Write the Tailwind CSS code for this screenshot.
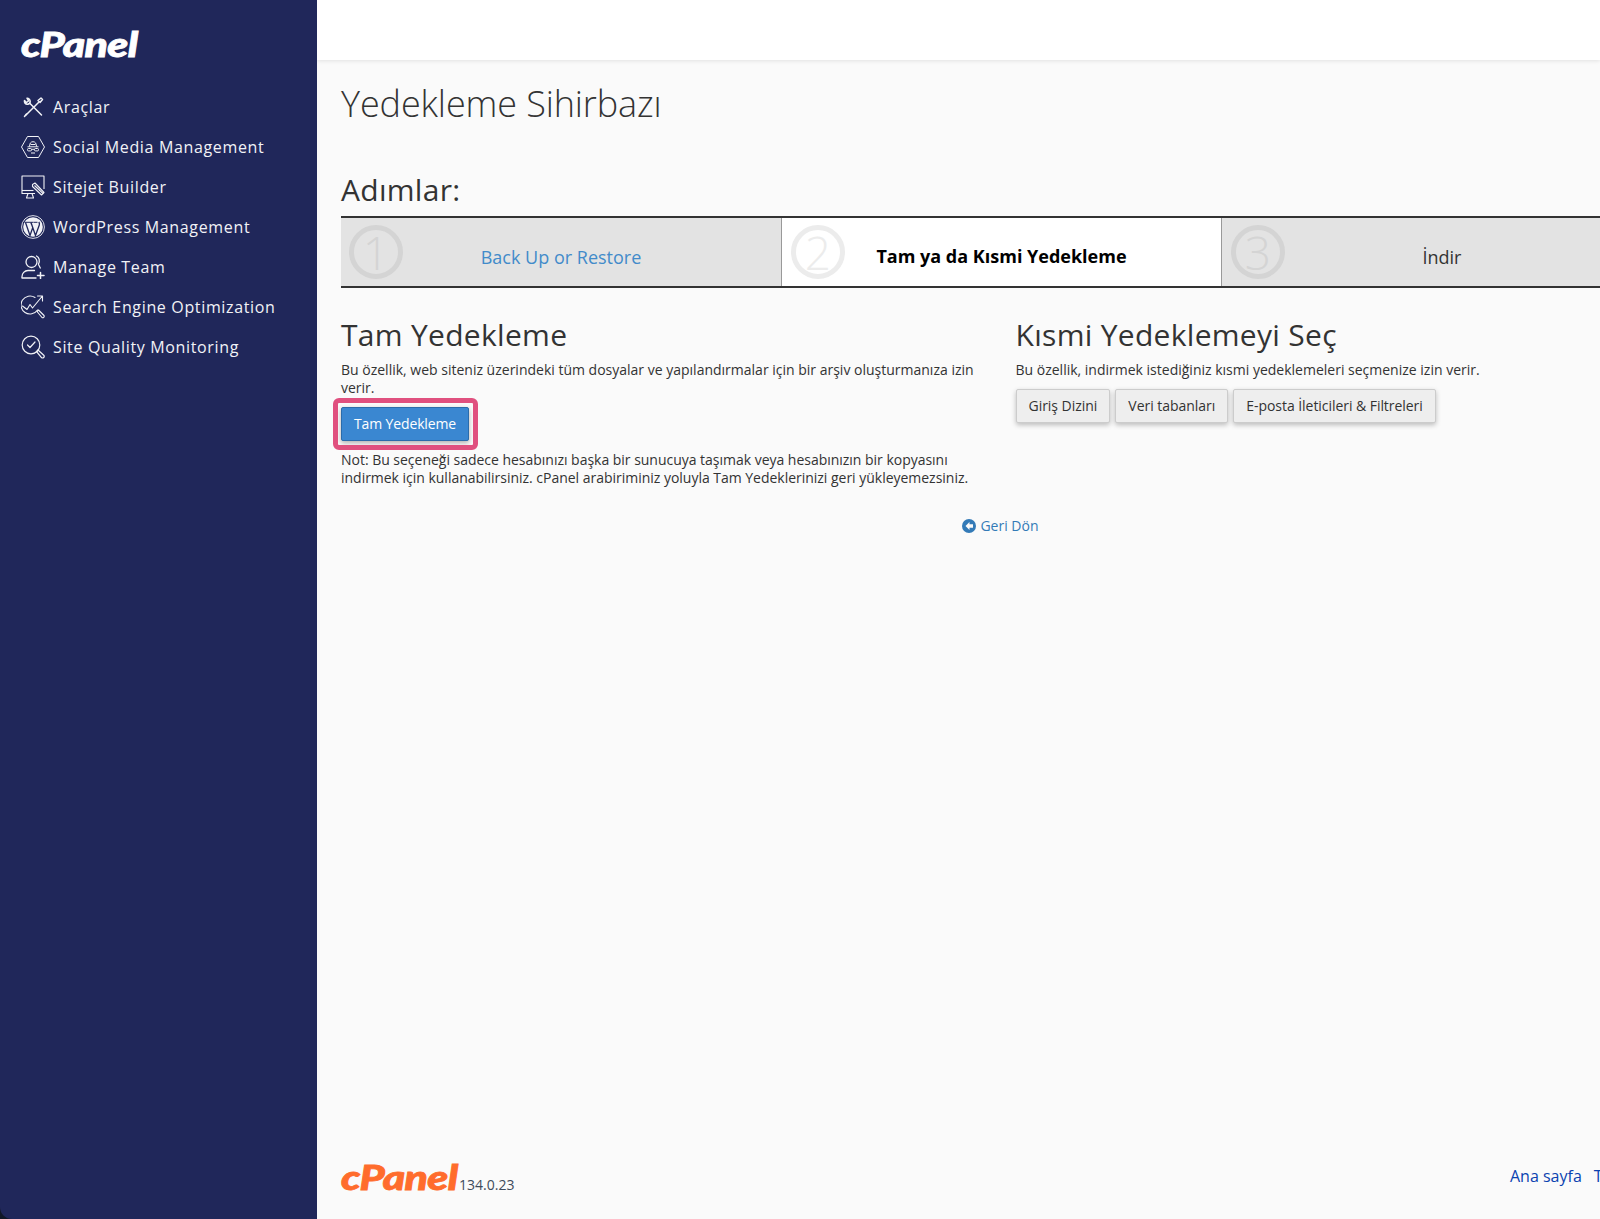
<!DOCTYPE html>
<html lang="tr">
<head>
<meta charset="utf-8">
<title>Yedekleme Sihirbazı</title>
<script src="https://cdn.jsdelivr.net/npm/@tailwindcss/browser@4"></script>
</head>
<body class="bg-[#111827] overflow-hidden font-['Open_Sans',sans-serif]">
<div class="flex w-[1600px] h-[1219px] overflow-hidden">
  <aside class="w-[317px] shrink-0 bg-[#20275a] rounded-bl-[12px] pl-[21px] pt-[26px] text-[#f1f2f6]">
    <div class="font-['Lato',sans-serif] font-black italic text-[34px] leading-[36px] tracking-[-0.5px] text-white h-[36px] origin-left scale-x-[1.26] [-webkit-text-stroke:0.8px_white]">cPanel</div>
    <nav class="mt-[25px] flex flex-col">
      <a class="flex items-center h-[40px] gap-[8px] text-[16px] font-medium tracking-[0.65px]">
        <svg class="w-[24px] h-[24px]" viewBox="0 0 24 24" fill="none" stroke="currentColor" stroke-width="1.500" stroke-linecap="round" stroke-linejoin="round"><path d="M5 20 17.500 7.500"/><path d="M17 5.500 20 3l1.500 1.500L19 7.500z"/><path d="M9 8.500 20.500 20"/><path d="M3.500 5.500c-.5 2 1 4 3 3.800 1.500-.2 2.800-1.300 2.700-3C9 4.500 7.500 3 6 3.200L7.500 6 5.500 7.500z"/><path d="M3.500 21.500 5.500 19"/></svg>
        <span>Araçlar</span>
      </a>
      <a class="flex items-center h-[40px] gap-[8px] text-[16px] font-medium tracking-[0.65px]">
        <svg class="w-[24px] h-[24px]" viewBox="0 0 24 24" fill="none" stroke="currentColor" stroke-width="1" stroke-linejoin="round"><path d="M6.500 1.500h11L23.500 12l-6 10.500h-11L.5 12z"/><path d="M8.500 11.500c0-3 1.300-4.800 3.500-4.800s3.500 1.800 3.500 4.800M6.500 11.800h11"/><rect x="6.500" y="13.500" width="4" height="2.400" rx="1"/><rect x="13.500" y="13.500" width="4" height="2.400" rx="1"/><path d="M10.500 14.300h3M9.500 9.500h5M10 18h4"/></svg>
        <span>Social Media Management</span>
      </a>
      <a class="flex items-center h-[40px] gap-[8px] text-[16px] font-medium tracking-[0.65px]">
        <svg class="w-[24px] h-[24px]" viewBox="0 0 24 24" fill="none" stroke="currentColor" stroke-width="1.100" stroke-linejoin="round"><path d="M14 18.500H1V1h22v13"/><path d="M1 15.500h11.500"/><path d="M7 18.500 5.500 23h7L11 18.500"/><path d="M11.500 9.500 14 8l9 9.500-2.500 2.500-9-8.500z"/><path d="M13.500 10.500l8.500 8"/></svg>
        <span>Sitejet Builder</span>
      </a>
      <a class="flex items-center h-[40px] gap-[8px] text-[16px] font-medium tracking-[0.65px]">
        <svg class="w-[24px] h-[24px]" viewBox="0 0 24 24" fill="none"><circle cx="12" cy="12" r="11.400" stroke="currentColor" stroke-width="0.9"/><circle cx="12" cy="12" r="9.800" fill="currentColor"/><path d="M4.500 7.500 9 20.500l2.800-8-2-5M10 7.500l4.500 13 3.800-10.500c.5-1.400 0-2.300-.5-3" stroke="#20275a" stroke-width="1.300" fill="none"/><path d="M3.500 7.300h8.800M12.500 7.300h4" stroke="#20275a" stroke-width="1"/></svg>
        <span>WordPress Management</span>
      </a>
      <a class="flex items-center h-[40px] gap-[8px] text-[16px] font-medium tracking-[0.65px]">
        <svg class="w-[24px] h-[24px]" viewBox="0 0 24 24" fill="none" stroke="currentColor" stroke-width="1.300" stroke-linecap="round"><circle cx="10.500" cy="7" r="5.500"/><path d="M15.500 1c3 1.500 3.500 5 2 8M17.500 9.500l1.800 3.500"/><path d="M1 23c-.5-5 3-7.500 6-7.500h6.500M1 23h14"/><path d="M19.500 17.500v6M16.500 20.500h6.500" stroke-width="1.500"/></svg>
        <span>Manage Team</span>
      </a>
      <a class="flex items-center h-[40px] gap-[8px] text-[16px] font-medium tracking-[0.65px]">
        <svg class="w-[24px] h-[24px]" viewBox="0 0 24 24" fill="none" stroke="currentColor" stroke-width="1.100" stroke-linecap="round" stroke-linejoin="round"><path d="M14 2.500A9 9 0 1 0 16.500 15"/><path d="M1.500 11 6 14.500l3-5 2.500 3.500L21 1.500M16.500 1h5v5"/><path d="m16 16.500 1.500-1.500 5.500 5.500c.8 1.500-.8 2.800-2 2z"/></svg>
        <span>Search Engine Optimization</span>
      </a>
      <a class="flex items-center h-[40px] gap-[8px] text-[16px] font-medium tracking-[0.65px]">
        <svg class="w-[24px] h-[24px]" viewBox="0 0 24 24" fill="none" stroke="currentColor" stroke-width="1.200" stroke-linecap="round" stroke-linejoin="round"><circle cx="10" cy="10" r="8.800"/><path d="m6.500 10 2.500 2.500L14 7"/><path d="m15.500 16.500 1.500-1.500 6 5.500c.8 1.500-.8 3-2.300 2.300z"/></svg>
        <span>Site Quality Monitoring</span>
      </a>
    </nav>
  </aside>
  <div class="flex-1 min-w-0 bg-[#fafafa] flex flex-col overflow-hidden">
    <header class="h-[60px] shrink-0 bg-white shadow-[0_1px_4px_rgba(0,0,0,0.1)]"></header>
    <main class="w-[1319px] ml-[24px] flex flex-col flex-1 text-[#333]">
      <h1 class="mt-[22px] text-[36px] leading-[44px] font-light tracking-[-0.11px]">Yedekleme Sihirbazı</h1>
      <h2 class="mt-[46px] text-[30px] leading-[36px] font-medium tracking-[0.3px]">Adımlar:</h2>
      <div class="mt-[8px] flex h-[72px] border-y-2 border-[#333]">
        <div class="relative w-[441px] shrink-0 bg-[#e3e3e3] border-r-[1.500px] border-[#999] flex items-center justify-center pt-[10px]">
          <div class="absolute left-[8px] top-[7px] w-[54px] h-[54px] rounded-full border-[5px] border-[#d4d4d4] flex items-center justify-center text-[#d4d4d4] text-[46px] font-light leading-none">1</div>
          <a class="text-[18px] text-[#428bca]">Back Up or Restore</a>
        </div>
        <div class="relative w-[440px] shrink-0 bg-white border-r-[1.500px] border-[#999] flex items-center justify-center pt-[8px]">
          <div class="absolute left-[9px] top-[7px] w-[54px] h-[54px] rounded-full border-[5px] border-[#ececec] flex items-center justify-center text-[#ececec] text-[46px] font-light leading-none">2</div>
          <span class="text-[18px] font-bold text-black">Tam ya da Kısmi Yedekleme</span>
        </div>
        <div class="relative w-[440px] shrink-0 bg-[#e3e3e3] flex items-center justify-center pt-[10px]">
          <div class="absolute left-[9px] top-[7px] w-[54px] h-[54px] rounded-full border-[5px] border-[#d4d4d4] flex items-center justify-center text-[#d4d4d4] text-[46px] font-light leading-none">3</div>
          <span class="text-[18px] text-[#333]">İndir</span>
        </div>
      </div>
      <div class="grid grid-cols-2 gap-x-[30px]">
        <section>
          <h2 class="mt-[29px] text-[30px] leading-[36px] tracking-[0.3px]">Tam Yedekleme</h2>
          <p class="mt-[8px] text-[14px] leading-[18px]">Bu özellik, web siteniz üzerindeki tüm dosyalar ve yapılandırmalar için bir arşiv oluşturmanıza izin verir.</p>
          <div class="relative mt-[10px] w-fit">
            <button class="block w-[128px] h-[34px] pb-[2px] bg-[#3a87d1] border border-[#2b6cab] rounded-[2px] text-white text-[14px] tracking-[-0.12px] shadow-[0_2px_5px_rgba(0,0,0,0.3)]">Tam Yedekleme</button>
            <div class="absolute -left-[8px] -top-[9px] w-[145px] h-[52px] border-[5px] border-[#e0507f] rounded-[6px]"></div>
          </div>
          <p class="mt-[10px] text-[14px] leading-[18px] tracking-[-0.02px]">Not: Bu seçeneği sadece hesabınızı başka bir sunucuya taşımak veya hesabınızın bir kopyasını indirmek için kullanabilirsiniz. cPanel arabiriminiz yoluyla Tam Yedeklerinizi geri yükleyemezsiniz.</p>
        </section>
        <section>
          <h2 class="mt-[29px] text-[30px] leading-[36px] tracking-[0.3px]">Kısmi Yedeklemeyi Seç</h2>
          <p class="mt-[8px] text-[14px] leading-[18px]">Bu özellik, indirmek istediğiniz kısmi yedeklemeleri seçmenize izin verir.</p>
          <div class="mt-[10px] flex gap-[5px]">
            <button class="h-[34px] px-[12px] pb-[2px] bg-[#eee] border border-[#ccc] rounded-[2px] text-[14px] tracking-[-0.03px] text-[#333] shadow-[0_2px_5px_rgba(0,0,0,0.25)]">Giriş Dizini</button>
            <button class="h-[34px] px-[12px] pb-[2px] bg-[#eee] border border-[#ccc] rounded-[2px] text-[14px] tracking-[-0.03px] text-[#333] shadow-[0_2px_5px_rgba(0,0,0,0.25)]">Veri tabanları</button>
            <button class="h-[34px] px-[12px] pb-[2px] bg-[#eee] border border-[#ccc] rounded-[2px] text-[14px] tracking-[-0.05px] text-[#333] shadow-[0_2px_5px_rgba(0,0,0,0.25)]">E-posta İleticileri &amp; Filtreleri</button>
          </div>
        </section>
      </div>
      <div class="mt-[30px] flex justify-center items-center gap-[4px] text-[14px] leading-[18px] text-[#337ab7]">
        <svg class="w-[14px] h-[14px]" viewBox="0 0 14 14"><circle cx="7" cy="7" r="7" fill="currentColor"/><path d="M7.500 3 3.500 7l4 4V8.700h3.500V5.300H7.500z" fill="#fafafa"/></svg>
        <a>Geri Dön</a>
      </div>
      <footer class="mt-auto flex h-[59px] shrink-0">
        <div class="w-[1169px] shrink-0 flex items-end h-[34px] gap-[2px]">
          <span class="font-['Lato',sans-serif] font-black italic text-[34px] leading-[34px] tracking-[-0.5px] text-[#ff6c2c] [-webkit-text-stroke:0.8px_#ff6c2c] origin-left scale-x-[1.26] w-[116px]">cPanel</span>
          <span class="text-[14px] leading-[18px] text-[#3d4b5c]">134.0.23</span>
        </div>
        <div class="flex gap-[12px] mt-[5px] text-[16px] leading-[22px] whitespace-nowrap text-[#0a42b0] h-[22px]">
          <a>Ana sayfa</a><a>Ticari Markalar</a>
        </div>
      </footer>
    </main>
  </div>
</div>
</body>
</html>
